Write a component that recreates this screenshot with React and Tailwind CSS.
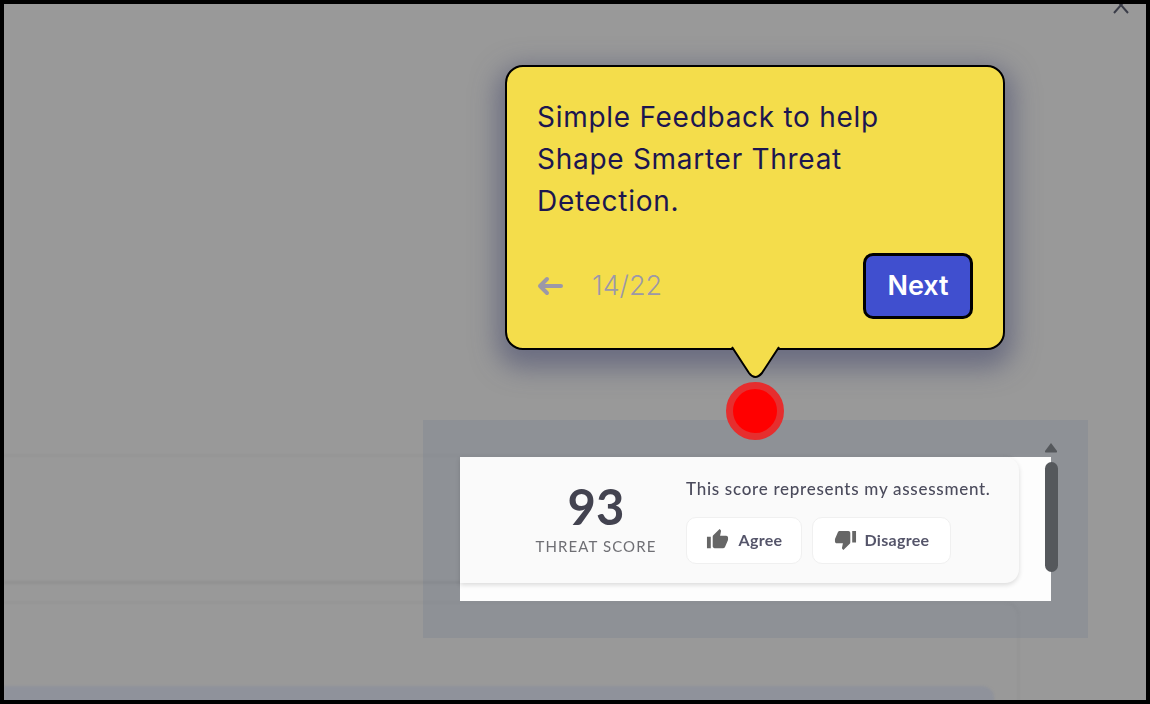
import React from "react";
import { MdThumbUp, MdThumbDown } from "react-icons/md";

const Tooltip = () => (
  <div className="absolute left-[501px] top-[61px] w-[500px] h-[285px] rounded-[18px] border-2 border-black bg-[#f4dd4b] shadow-[0_10px_26px_8px_rgba(70,72,110,0.55)] px-[30px] pt-[29px] font-['Inter',sans-serif]">
    <p className="text-[28px] leading-[42px] font-[430] text-[#1c1650] tracking-[0.72px] w-[420px]">
      Simple Feedback to help Shape Smarter Threat Detection.
    </p>
    <div className="flex items-center justify-between mt-[31px]">
      <div className="flex items-center gap-[29px] text-[#9c98a8]">
        <svg width="26" height="20" viewBox="0 0 26 20" fill="none" stroke="currentColor" strokeWidth="4" strokeLinecap="round" strokeLinejoin="round">
          <path d="M24 10H3M10 3L3 10l7 7" />
        </svg>
        <span className="text-[27px] font-light">14/22</span>
      </div>
      <button className="w-[110px] h-[66px] rounded-[10px] border-[3px] border-black bg-[#404fcf] text-white text-[27px] font-semibold">
        Next
      </button>
    </div>
    {/* pointer */}
    <svg className="absolute left-[224px] top-[279px]" width="50" height="34" viewBox="0 0 50 34">
      <path d="M1 1 L18 27 Q24 35 31 27 L48 1 Z" fill="#f4dd4b" />
      <path d="M1 1 L18 27 Q24 35 31 27 L48 1" fill="none" stroke="#000" strokeWidth="2" />
    </svg>
  </div>
);

const ScoreCard = () => (
  <div className="w-[559px] h-[126px] rounded-r-[14px] bg-[#fafafa] shadow-[0_2px_5px_rgba(0,0,0,0.14)] flex justify-end items-start font-['Lato',sans-serif] blur-[0.4px]">
    <div className="flex flex-col items-center w-[130px] mr-[25px] pt-[22px]">
      <span className="text-[49px] leading-[54px] font-bold text-[#434350]">93</span>
      <span className="text-[15px] leading-[20px] mt-[3px] tracking-[1.1px] text-[#6f6f74]">THREAT SCORE</span>
    </div>
    <div className="w-[333px] pt-[21px]">
      <p className="text-[17px] leading-[22px] font-medium tracking-[0.72px] text-[#4b4b5c] whitespace-nowrap">This score represents my assessment.</p>
      <div className="flex gap-[10px] mt-[17px]">
        <button className="w-[116px] h-[47px] pb-[2px] flex items-center justify-center gap-[10px] rounded-[10px] bg-white border border-[#f0f0f0] text-[16px] font-bold tracking-[0.3px] text-[#55556a]">
          <MdThumbUp className="text-[#666666]" size={23} />
          Agree
        </button>
        <button className="w-[139px] h-[47px] pb-[2px] flex items-center justify-center gap-[8px] rounded-[10px] bg-white border border-[#f0f0f0] text-[16px] font-bold tracking-[0.3px] text-[#55556a]">
          <MdThumbDown className="text-[#666666]" size={23} />
          Disagree
        </button>
      </div>
    </div>
  </div>
);

export default function App() {
  return (
    <div className="w-[1150px] h-[704px] border-4 border-black bg-[#999999] relative overflow-hidden">
      {/* dimmed page underneath */}
      <div className="w-[1015px] pt-[451px] blur-[0.8px]">
        <div className="h-[129px] border-t border-[#8f8f8f] border-b-3 border-b-[#909090] rounded-r-[14px]" />
        <div className="h-[200px] mt-[18px] border-t border-r border-[#8f8f8f] rounded-tr-[14px] pt-[83px] pr-[24px]">
          <div className="h-[40px] bg-[#8f929b] rounded-tr-[12px]" />
        </div>
      </div>

      {/* close icon, clipped by the frame */}
      <svg className="absolute left-[1109px] top-[-8px]" width="16" height="18" viewBox="0 0 16 18" fill="none" stroke="#3a3c48" strokeWidth="2">
        <path d="M1 1l14 16M15 1L1 17" />
      </svg>

      {/* spotlight around the target */}
      <div className="absolute left-[419px] top-[416px] w-[665px] h-[218px] bg-[#62718a]/20 p-[37px]">
        <div className="w-[591px] h-[144px] bg-[#fdfdfd]">
          <ScoreCard />
        </div>
        <div className="absolute left-[621px] top-[22px] flex flex-col items-center w-[14px]">
          <svg width="14" height="11" viewBox="0 0 14 11">
            <path d="M7 1 L13 9 Q13.5 10.5 12 10.5 H2 Q0.5 10.5 1 9 Z" fill="#55585c" />
          </svg>
          <div className="w-[13px] h-[110px] mt-[9px] rounded-full bg-[#55585c]" />
        </div>
      </div>

      <Tooltip />

      {/* red marker */}
      <div className="absolute left-[722px] top-[378px] w-[58px] h-[58px] rounded-full border-[7px] border-[#e62e2e] bg-[#ff0000]" />
    </div>
  );
}
